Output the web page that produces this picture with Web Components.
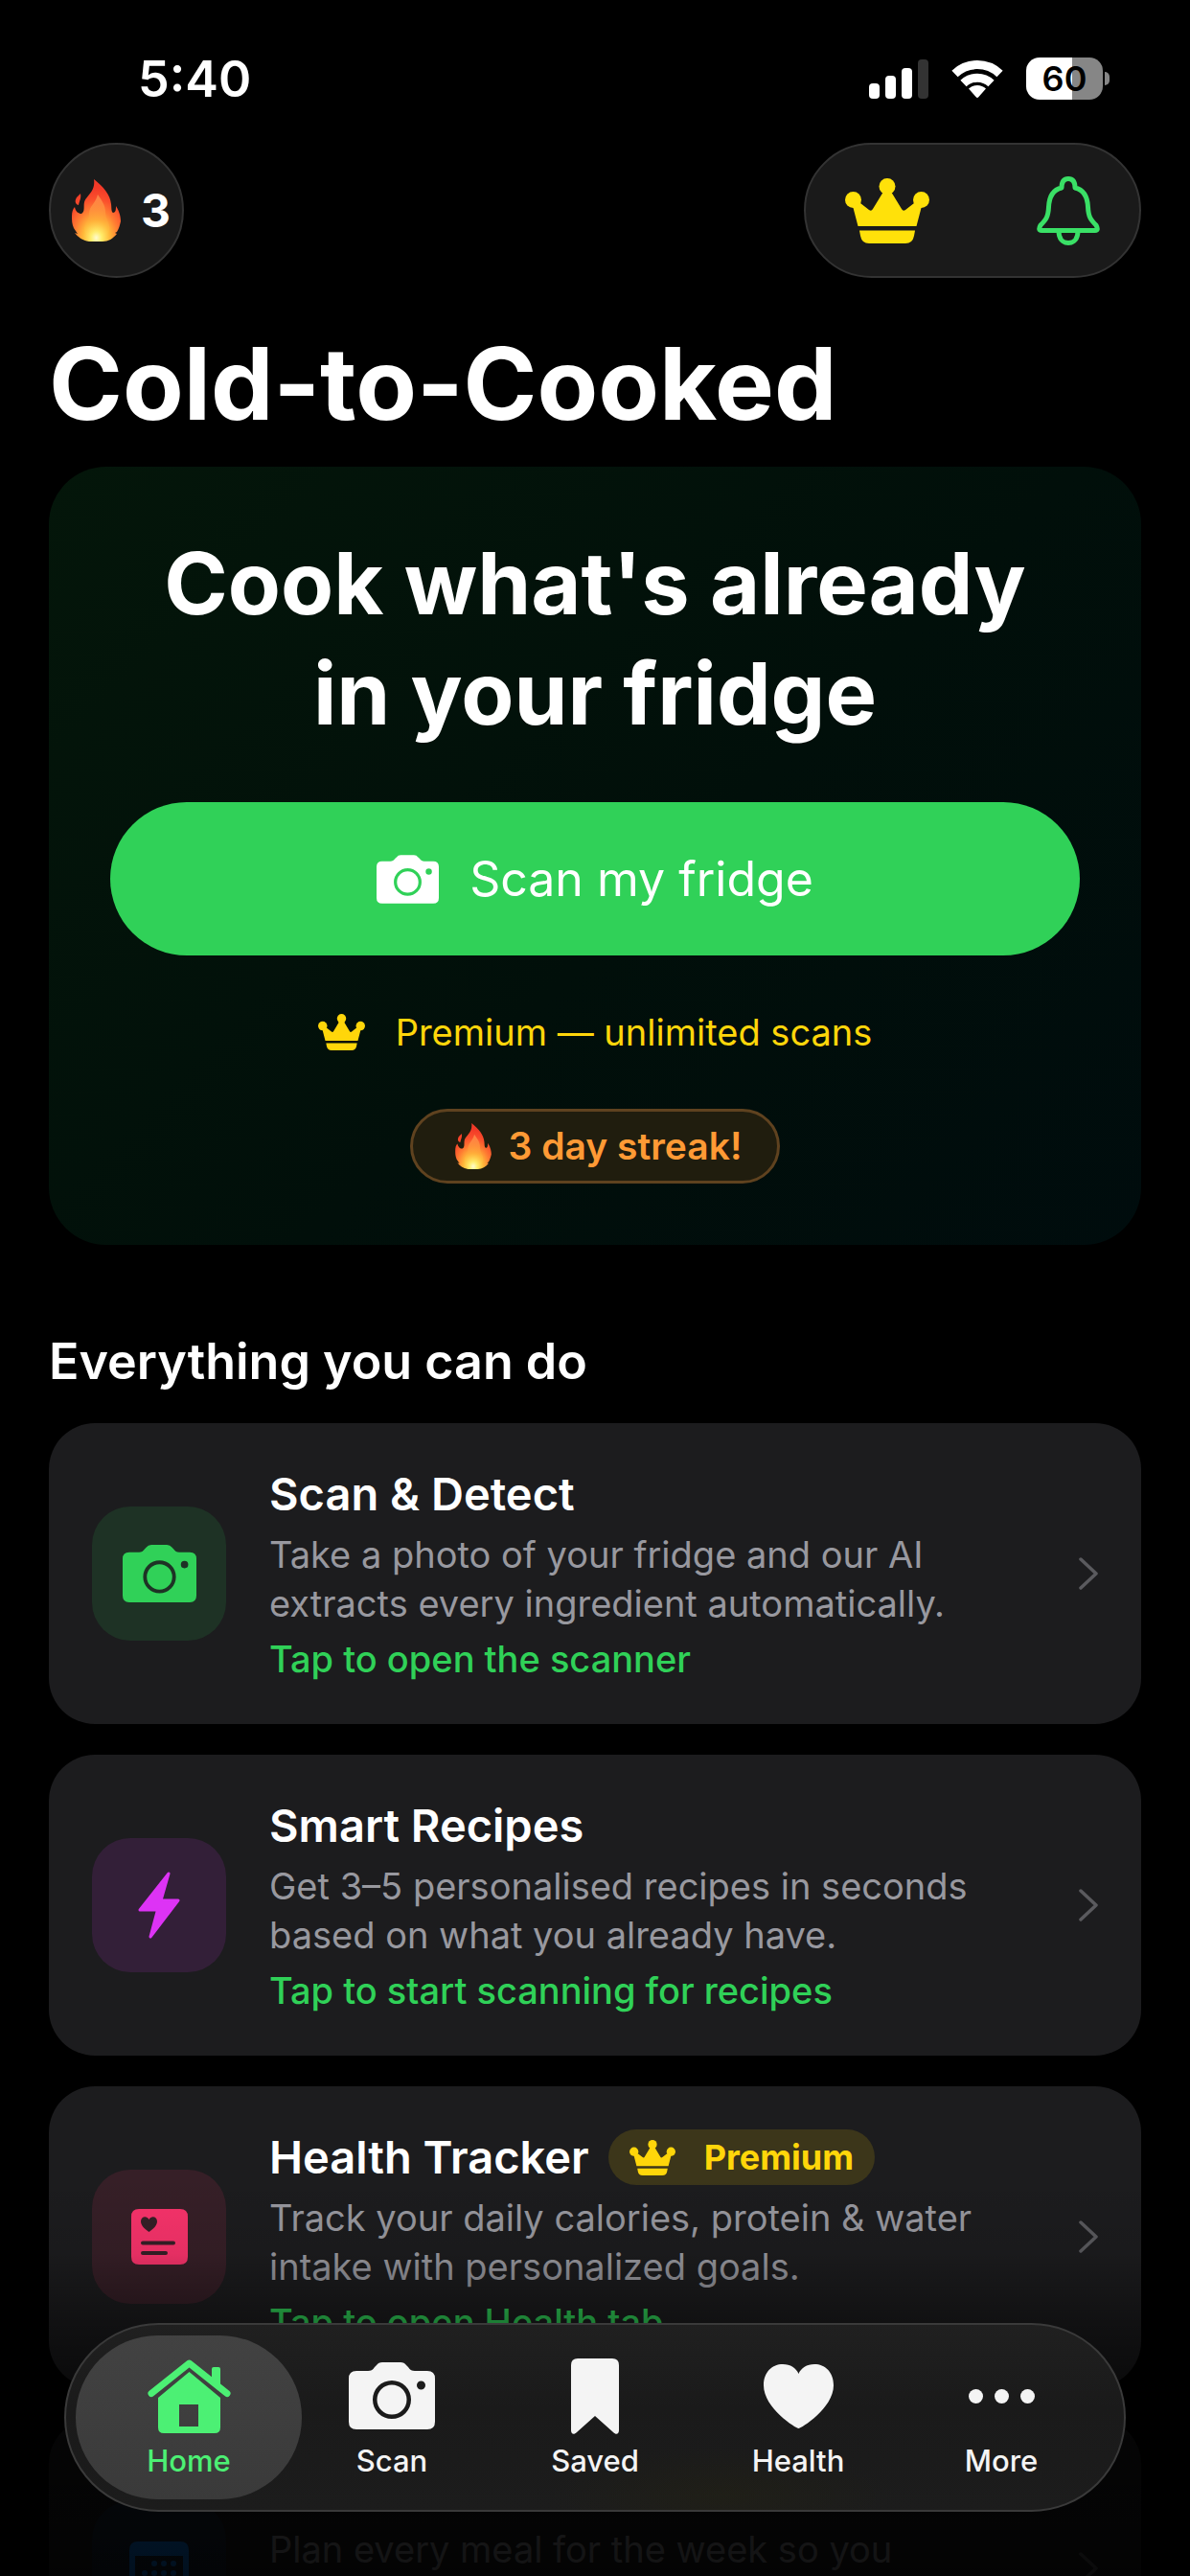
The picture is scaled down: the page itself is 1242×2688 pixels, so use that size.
<!DOCTYPE html>
<html lang="en">
<head>
<meta charset="utf-8">
<meta name="viewport" content="width=device-width, initial-scale=1">
<title>Cold-to-Cooked</title>
<style>
    html, body{
        margin: 0;
        height: 100%;
        background: #000;
    }
    body{
        color: #fff;
        font-family: Inter, "Liberation Sans", sans-serif;
        --green: #30d158;
        --gold: #ffd60a;
        --gutter: 51px;
    }
</style>
</head>
<body>
<cook-app>
    <status-bar slot="status" time="5:40" battery="60"></status-bar>
    <top-bar slot="top" streak="3"></top-bar>
    <hero-card>
        <span slot="title">Cook what's already<br>in your fridge</span>
        <span slot="action">Scan my fridge</span>
        <span slot="plan">Premium — unlimited scans</span>
        <span slot="streak">3 day streak!</span>
    </hero-card>
    <feature-list heading="Everything you can do">
        <feature-card icon="camera" tint="#30d158" width="77" href="#scan">
            <span slot="title">Scan &amp; Detect</span>
            Take a photo of your fridge and our AI<br>extracts every ingredient automatically.
            <span slot="hint">Tap to open the scanner</span>
        </feature-card>
        <feature-card icon="bolt" tint="#dd33f5" width="44" href="#recipes">
            <span slot="title">Smart Recipes</span>
            Get 3–5 personalised recipes in seconds<br>based on what you already have.
            <span slot="hint">Tap to start scanning for recipes</span>
        </feature-card>
        <feature-card icon="record" tint="#f8336b" width="59" href="#health">
            <span slot="title">Health Tracker</span>
            <premium-badge slot="title">Premium</premium-badge>
            Track your daily calories, protein &amp; water<br>intake with personalized goals.
            <span slot="hint">Tap to open Health tab</span>
        </feature-card>
        <feature-card icon="calendar" tint="#0a84ff" width="62" href="#planner">
            Plan every meal for the week so you
        </feature-card>
    </feature-list>
    <tab-bar slot="tabs">
        <tab-item icon="house" width="87" href="#home" active>Home</tab-item>
        <tab-item icon="camera" width="90" href="#scan">Scan</tab-item>
        <tab-item icon="bookmark" width="50" href="#saved">Saved</tab-item>
        <tab-item icon="heart" width="73" href="#health">Health</tab-item>
        <tab-item icon="dots" width="69" href="#more">More</tab-item>
    </tab-bar>
</cook-app>

<script>
// [viewBox width, viewBox height, markup]
const ICONS = {
    camera: [90, 70, `<path fill="currentColor" fill-rule="evenodd" d="M8 9H20C23 9 25 8 27 5L29 3Q31 0 35 0H54Q58 0 60 3L62 5C64 8 66 9 69 9H82Q90 9 90 17V62Q90 70 82 70H8Q0 70 0 62V17Q0 9 8 9ZM25 39a20 20 0 1 0 40 0a20 20 0 1 0-40 0ZM71 24a4.5 4.5 0 1 0 9 0a4.5 4.5 0 1 0-9 0Z"/><circle cx="45" cy="39" r="15.5" fill="currentColor"/>`],
    crown: [88, 68, `<g fill="currentColor"><circle cx="8.5" cy="22.5" r="8.5"/><circle cx="44" cy="8.5" r="8.5"/><circle cx="79.5" cy="22.5" r="8.5"/><path d="M8 29L16 26L25 33Q27.500 35 29 32L40 14H48L59 32Q60.500 35 63 33L72 26L80 29L74.500 50H13.500Z"/><path d="M15 54.500H73L72 60Q70.500 68 63 68H25Q17.500 68 16 60Z"/></g>`],
    bell: [66, 72, `<g fill="none" stroke="currentColor" stroke-width="5" stroke-linejoin="round"><path d="M26 12C26 6 28 2.500 33 2.500S40 6 40 12C49 14 53 22 53.500 32C54 42 56 45 62 51Q65 56.500 61 56.500H5Q1 56.500 4 51C10 45 12 42 12.500 32C13 22 17 14 26 12Z"/><path d="M23 57C23 65 27 69.500 33 69.500S43 65 43 57"/></g>`],
    flame: [51, 65, `<defs><radialGradient id="f" cx=".5" cy=".94" r=".8"><stop offset="0" stop-color="#fffbd0"/><stop offset=".14" stop-color="#ffee6b"/><stop offset=".34" stop-color="#ffb93a"/><stop offset=".56" stop-color="#ff7d32"/><stop offset=".78" stop-color="#fa4f2c"/><stop offset="1" stop-color="#f23a28"/></radialGradient><linearGradient id="s" x2="0" y2="1"><stop offset="0" stop-color="#ff8a4d" stop-opacity=".9"/><stop offset=".6" stop-color="#ffa63a" stop-opacity=".5"/><stop offset="1" stop-color="#ffe25a" stop-opacity="0"/></linearGradient></defs><path fill="url(#f)" d="M23 0C33 8 40 16 41 26C41.500 30 41 34 43 35C46 35 46 31 46 28C50 34 51 40 51 44C50 48 49 52 47 55L45 56L47 57C43 62 38 65 32 65H18C11 64 6 60 3 56L6 57L2 51C0 47 0 42 0 39C0 34 1 31 3 29C4 34 7 36 10 36C14 34 12 28 13 24C15 17 25 13 23 0ZM9 15C10 20 8 22 7 27C3 26 3 22 5 19Z"/><path fill="url(#s)" d="M27 16C25 25 18 28 18 36C18 44 12 48 13 54C16 62 36 62 39 54C41 47 35 43 35 34C35 27 31 22 27 16Z"/>`],
    bolt: [44, 70, `<path fill="currentColor" stroke="currentColor" stroke-width="3" stroke-linejoin="round" d="M32 2L24 30H42L13 68L20.500 40H2Z"/>`],
    record: [59, 58, `<path fill="currentColor" fill-rule="evenodd" d="M8 0H51Q59 0 59 8V50Q59 58 51 58H8Q0 58 0 50V8Q0 0 8 0ZM18.500 24C14 21 10 17 10 13C10 8 16 6.500 18.500 11C21 6.500 27 8 27 13C27 17 23 21 18.500 24ZM12 33.500a2 2 0 0 0 0 4H44a2 2 0 0 0 0-4ZM12 44a2 2 0 0 0 0 4H36a2 2 0 0 0 0-4Z"/>`],
    calendar: [62, 56, `<path fill="currentColor" fill-rule="evenodd" d="M9 0H53Q62 0 62 9V47Q62 56 53 56H9Q0 56 0 47V9Q0 0 9 0ZM6 15V45Q6 50 11 50H51Q56 50 56 45V15Z"/><g fill="currentColor"><circle cx="26" cy="23" r="3"/><circle cx="36" cy="23" r="3"/><circle cx="46" cy="23" r="3"/><circle cx="16" cy="33" r="3"/><circle cx="26" cy="33" r="3"/><circle cx="36" cy="33" r="3"/><circle cx="46" cy="33" r="3"/><circle cx="16" cy="43" r="3"/><circle cx="26" cy="43" r="3"/><circle cx="36" cy="43" r="3"/></g>`],
    house: [87, 77, `<path fill="currentColor" fill-rule="evenodd" d="M43.500 13L76 40V71Q76 77 70 77H17Q11 77 11 71V40ZM33 47V70H53V47Z"/><path fill="currentColor" d="M67 26V10Q67 8 69 8H74Q76 8 76 10V34Z"/><path fill="none" stroke="currentColor" stroke-width="7" stroke-linecap="round" stroke-linejoin="round" d="M4 35.500L43.500 4L83 35.500"/>`],
    bookmark: [50, 79, `<path fill="currentColor" d="M7 0H43Q50 0 50 7V75C50 79 47 80 44 77L25 60L6 77C3 80 0 79 0 75V7Q0 0 7 0Z"/>`],
    heart: [73, 67, `<path fill="currentColor" d="M36.500 67C34 67 0 46 0 22C0 8 9 0 20 0C28 0 34 4 36.500 10C39 4 45 0 53 0C64 0 73 8 73 22C73 46 39 67 36.500 67Z"/>`],
    dots: [69, 15, `<g fill="currentColor"><circle cx="7.500" cy="7.500" r="7.500"/><circle cx="34.500" cy="7.500" r="7.500"/><circle cx="61.500" cy="7.500" r="7.500"/></g>`],
    chevron: [20, 34, `<path fill="none" stroke="currentColor" stroke-width="3.500" stroke-linecap="round" stroke-linejoin="round" d="M2 2L18 17L2 32"/>`],
    signal: [62, 41, `<g fill="#fff"><rect y="25" width="11" height="16" rx="4"/><rect x="17" y="17" width="11" height="24" rx="4"/><rect x="34" y="9" width="11" height="32" rx="4"/></g><rect x="51" width="11" height="41" rx="4" fill="#333"/>`],
    wifi: [54, 40, `<g fill="none" stroke="#fff" stroke-width="9"><path d="M3.500 15A34 34 0 0 1 50.500 15"/><path d="M12.500 25A21 21 0 0 1 41.500 25"/></g><path fill="#fff" d="M18 30.500A13 13 0 0 1 36 30.500L28.500 39Q27 41 25.500 39Z"/>`]
};

class AppIcon extends HTMLElement{
    connectedCallback(){
        const [w, h, body] = ICONS[this.getAttribute("name")];
        const width = this.getAttribute("width") || w;
        this.attachShadow({ mode: "open" }).innerHTML = `
            <style>
                :host{ display: inline-flex; flex: none; }
                svg{ display: block; }
            </style>
            <svg width="${width}" height="${Math.round(width * h / w)}" viewBox="0 0 ${w} ${h}" aria-hidden="true">${body}</svg>
        `;
    }
}

class CookApp extends HTMLElement{
    connectedCallback(){
        this.attachShadow({ mode: "open" }).innerHTML = `
            <style>
                :host{
                    position: relative;
                    display: block;
                    height: 100vh;
                    overflow: hidden;
                }
                .scroll{
                    height: 100%;
                    overflow-y: auto;
                    scrollbar-width: none;
                }
                main{ padding: 0 var(--gutter) 240px; }
                h1{
                    margin: 49px 0 26px;
                    font-size: 104px;
                    line-height: 122px;
                    font-weight: 700;
                }
                .fade{
                    position: absolute;
                    inset: auto 0 0;
                    height: 420px;
                    background: linear-gradient(transparent, rgba(0,0,0,.08) 20%, rgba(0,0,0,.4) 37%, rgba(0,0,0,.82) 66%, rgba(0,0,0,.88));
                    pointer-events: none;
                }
            </style>
            <div class="scroll">
                <slot name="status"></slot>
                <slot name="top"></slot>
                <main>
                    <h1>Cold-to-Cooked</h1>
                    <slot></slot>
                </main>
            </div>
            <div class="fade"></div>
            <slot name="tabs"></slot>
        `;
    }
}

class StatusBar extends HTMLElement{
    connectedCallback(){
        const level = this.getAttribute("battery");
        this.attachShadow({ mode: "open" }).innerHTML = `
            <style>
                :host{
                    display: flex;
                    align-items: center;
                    justify-content: space-between;
                    height: 134px;
                    padding: 15px 84px 0 144px;
                    font-weight: 600;
                }
                time{ font-size: 52px; }
                .right{ display: flex; align-items: center; gap: 24px; }
                .cell{ display: flex; align-items: center; gap: 2px; }
                .battery{
                    width: 80px;
                    border-radius: 14px;
                    background: linear-gradient(90deg, #fff ${level}%, #868686 0);
                    color: #000;
                    font-size: 36px;
                    line-height: 44px;
                    text-align: center;
                }
                .nub{
                    width: 5px;
                    height: 14px;
                    border-radius: 0 7px 7px 0;
                    background: #868686;
                }
            </style>
            <time>${this.getAttribute("time")}</time>
            <div class="right">
                <app-icon name="signal"></app-icon>
                <app-icon name="wifi"></app-icon>
                <div class="cell"><div class="battery">${level}</div><div class="nub"></div></div>
            </div>
        `;
    }
}

class TopBar extends HTMLElement{
    connectedCallback(){
        this.attachShadow({ mode: "open" }).innerHTML = `
            <style>
                :host{
                    display: flex;
                    justify-content: space-between;
                    padding: 0 var(--gutter);
                }
                button{
                    display: flex;
                    align-items: center;
                    padding: 0;
                    border: 0;
                    background: none;
                    color: inherit;
                    font: inherit;
                }
                .glass{
                    box-sizing: border-box;
                    height: 141px;
                    border: 2px solid #333;
                    border-radius: 72px;
                    background: #1a1a1a;
                }
                .streak{
                    gap: 21px;
                    padding: 0 12px 0 22px;
                    font-size: 48px;
                    font-weight: 700;
                }
                .actions{
                    display: flex;
                    align-items: center;
                    gap: 112px;
                    padding: 0 41px;
                }
                .crown{ color: #ffe10a; }
                .bell{ color: #3ae066; }
            </style>
            <button class="glass streak" aria-label="Streak"><app-icon name="flame"></app-icon>${this.getAttribute("streak")}</button>
            <div class="glass actions">
                <button class="crown" aria-label="Premium"><app-icon name="crown"></app-icon></button>
                <button class="bell" aria-label="Notifications"><app-icon name="bell"></app-icon></button>
            </div>
        `;
    }
}

class HeroCard extends HTMLElement{
    connectedCallback(){
        this.attachShadow({ mode: "open" }).innerHTML = `
            <style>
                :host{
                    display: flex;
                    flex-direction: column;
                    align-items: center;
                    gap: 56px;
                    padding: 64px;
                    border-radius: 60px;
                    background: linear-gradient(135deg, #04160a, #010f0a 55%, #000c0d);
                }
                h2{
                    margin: 0;
                    font-size: 90px;
                    line-height: 115px;
                    font-weight: 700;
                    text-align: center;
                }
                button{
                    display: flex;
                    align-items: center;
                    justify-content: center;
                    gap: 32px;
                    width: 100%;
                    height: 160px;
                    padding: 0;
                    border: 0;
                    border-radius: 80px;
                    background: var(--green);
                    color: #fff;
                    font: inherit;
                    font-size: 50px;
                }
                .plan{
                    display: flex;
                    align-items: center;
                    gap: 32px;
                    color: var(--gold);
                    font-size: 38px;
                    line-height: 48px;
                }
                .streak{
                    display: flex;
                    align-items: center;
                    gap: 18px;
                    padding: 0 37px 0 44px;
                    border: 3px solid #5f421f;
                    border-radius: 39px;
                    background: #201d0e;
                    color: #ff9a35;
                    font-size: 39px;
                    line-height: 72px;
                    font-weight: 600;
                }
            </style>
            <h2><slot name="title"></slot></h2>
            <button><app-icon name="camera" width="65"></app-icon><slot name="action"></slot></button>
            <div class="plan"><app-icon name="crown" width="49"></app-icon><slot name="plan"></slot></div>
            <div class="streak"><app-icon name="flame" width="38"></app-icon><slot name="streak"></slot></div>
        `;
    }
}

class FeatureList extends HTMLElement{
    connectedCallback(){
        this.attachShadow({ mode: "open" }).innerHTML = `
            <style>
                :host{
                    display: flex;
                    flex-direction: column;
                    gap: 32px;
                    padding-top: 90px;
                }
                h2{
                    margin: 0;
                    font-size: 52px;
                    line-height: 64px;
                    font-weight: 600;
                }
            </style>
            <h2>${this.getAttribute("heading")}</h2>
            <slot></slot>
        `;
    }
}

class FeatureCard extends HTMLElement{
    connectedCallback(){
        const tint = this.getAttribute("tint");
        this.attachShadow({ mode: "open" }).innerHTML = `
            <style>
                :host{ display: block; }
                a{
                    display: flex;
                    align-items: center;
                    gap: 45px;
                    min-height: 224px;
                    padding: 45px;
                    border-radius: 48px;
                    background: #1c1c1e;
                    color: inherit;
                    text-decoration: none;
                }
                .tile{
                    display: grid;
                    place-items: center;
                    flex: none;
                    width: 140px;
                    height: 140px;
                    border-radius: 40px;
                    background: color-mix(in srgb, ${tint} 12%, #1c1c1e);
                    color: ${tint};
                }
                .text{
                    display: flex;
                    flex-direction: column;
                    gap: 9px;
                    flex: 1;
                }
                h3{
                    display: flex;
                    align-items: center;
                    gap: 20px;
                    margin: 0;
                    min-height: 58px;
                    font-size: 47px;
                    line-height: 58px;
                    font-weight: 600;
                }
                p{
                    margin: 0;
                    min-height: 102px;
                    color: #98989f;
                    font-size: 38px;
                    line-height: 51px;
                }
                .hint{
                    min-height: 46px;
                    color: var(--green);
                    font-size: 38px;
                    line-height: 46px;
                    font-weight: 500;
                }
                .chevron{ color: #5a5a5e; }
            </style>
            <a href="${this.getAttribute("href")}">
                <div class="tile"><app-icon name="${this.getAttribute("icon")}" width="${this.getAttribute("width")}"></app-icon></div>
                <div class="text">
                    <h3><slot name="title"></slot></h3>
                    <p><slot></slot></p>
                    <div class="hint"><slot name="hint"></slot></div>
                </div>
                <app-icon class="chevron" name="chevron"></app-icon>
            </a>
        `;
    }
}

class PremiumBadge extends HTMLElement{
    connectedCallback(){
        this.attachShadow({ mode: "open" }).innerHTML = `
            <style>
                :host{
                    display: flex;
                    align-items: center;
                    gap: 30px;
                    padding: 0 22px;
                    border-radius: 29px;
                    background: #3c361a;
                    color: var(--gold);
                    font-size: 36px;
                    line-height: 58px;
                    font-weight: 700;
                }
            </style>
            <app-icon name="crown" width="48"></app-icon>
            <slot></slot>
        `;
    }
}

class TabBar extends HTMLElement{
    connectedCallback(){
        this.attachShadow({ mode: "open" }).innerHTML = `
            <style>
                :host{
                    position: absolute;
                    inset: auto 67px 67px;
                }
                nav{
                    display: flex;
                    padding: 11px 10px;
                    border: 2px solid #3a3a3a;
                    border-radius: 99px;
                    background:
                        radial-gradient(180px 50px at 62% 92%, rgba(50,46,0,.16), transparent),
                        linear-gradient(#202020, #1a1a1a 45%, #1c1c1c);
                }
            </style>
            <nav><slot></slot></nav>
        `;
    }
}

class TabItem extends HTMLElement{
    connectedCallback(){
        this.attachShadow({ mode: "open" }).innerHTML = `
            <style>
                :host{ flex: 1; min-width: 0; }
                /* neighbouring tabs overlap so the active pill can be wider than its share */
                :host(:not(:first-child)){ margin-left: -24px; }
                a{
                    display: flex;
                    flex-direction: column;
                    align-items: center;
                    height: 171px;
                    border-radius: 86px;
                    color: #f4f4f4;
                    font-size: 31px;
                    line-height: 38px;
                    font-weight: 500;
                    text-decoration: none;
                }
                :host([active]) a{
                    background: linear-gradient(#424242, #3a3a3a);
                    color: #4cf074;
                }
                .icon{
                    display: grid;
                    place-items: center;
                    height: 80px;
                    padding: 23px 0 9px;
                }
            </style>
            <a href="${this.getAttribute("href")}">
                <div class="icon"><app-icon name="${this.getAttribute("icon")}" width="${this.getAttribute("width")}"></app-icon></div>
                <slot></slot>
            </a>
        `;
    }
}

customElements.define("app-icon", AppIcon);
customElements.define("cook-app", CookApp);
customElements.define("status-bar", StatusBar);
customElements.define("top-bar", TopBar);
customElements.define("hero-card", HeroCard);
customElements.define("feature-list", FeatureList);
customElements.define("feature-card", FeatureCard);
customElements.define("premium-badge", PremiumBadge);
customElements.define("tab-bar", TabBar);
customElements.define("tab-item", TabItem);
</script>
</body>
</html>
